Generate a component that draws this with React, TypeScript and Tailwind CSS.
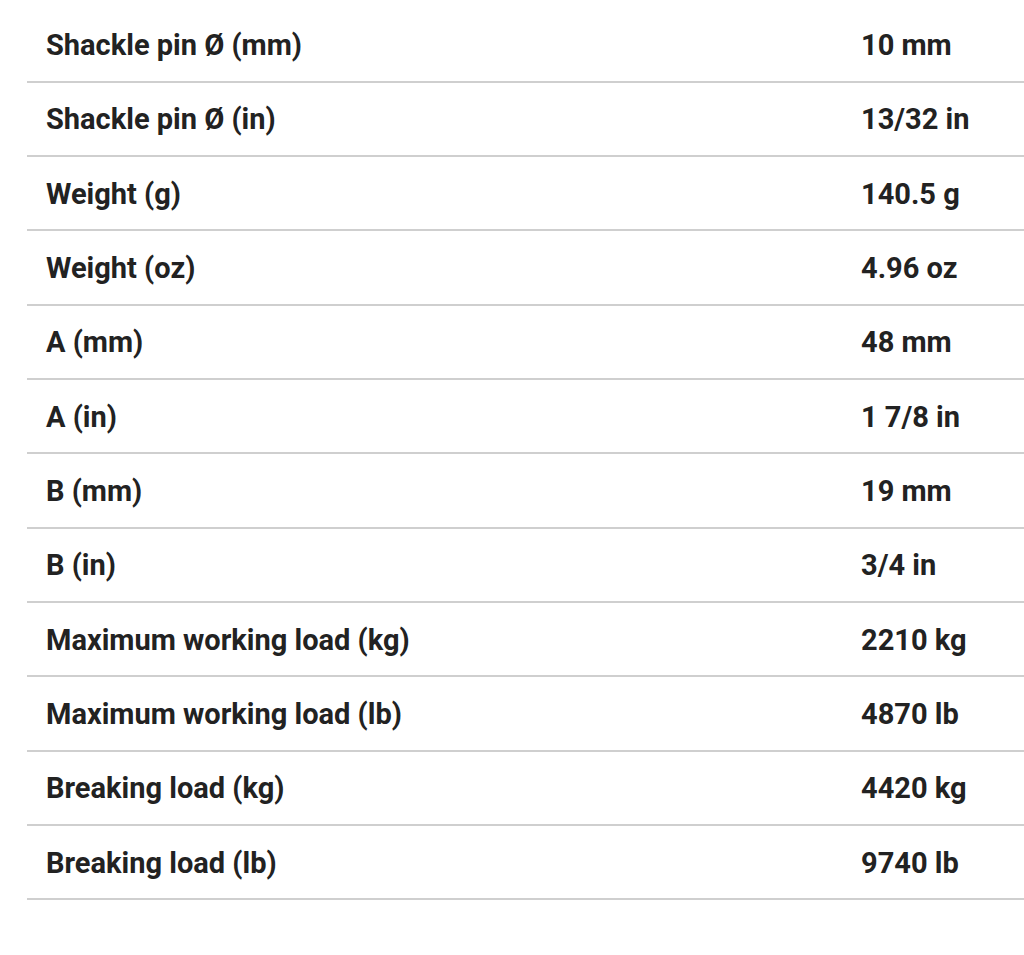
import React from "react";

const specs: [string, string][] = [
  ["Shackle pin Ø (mm)", "10 mm"],
  ["Shackle pin Ø (in)", "13/32 in"],
  ["Weight (g)", "140.5 g"],
  ["Weight (oz)", "4.96 oz"],
  ["A (mm)", "48 mm"],
  ["A (in)", "1 7/8 in"],
  ["B (mm)", "19 mm"],
  ["B (in)", "3/4 in"],
  ["Maximum working load (kg)", "2210 kg"],
  ["Maximum working load (lb)", "4870 lb"],
  ["Breaking load (kg)", "4420 kg"],
  ["Breaking load (lb)", "9740 lb"],
];

export default function App() {
  return (
    <div className="min-h-[955px] bg-white pl-[27px] pt-[8.5px] font-['Roboto',sans-serif] text-[#222]">
      {specs.map(([label, value]) => (
        <div key={label} className="flex h-[74.33px] items-center border-b-2 border-[#cfcfcf] pt-[2px]">
          <div className="w-[834px] shrink-0 pl-[19px] text-[29px] font-bold">{label}</div>
          <div className="text-[29px] font-bold">{value}</div>
        </div>
      ))}
    </div>
  );
}
